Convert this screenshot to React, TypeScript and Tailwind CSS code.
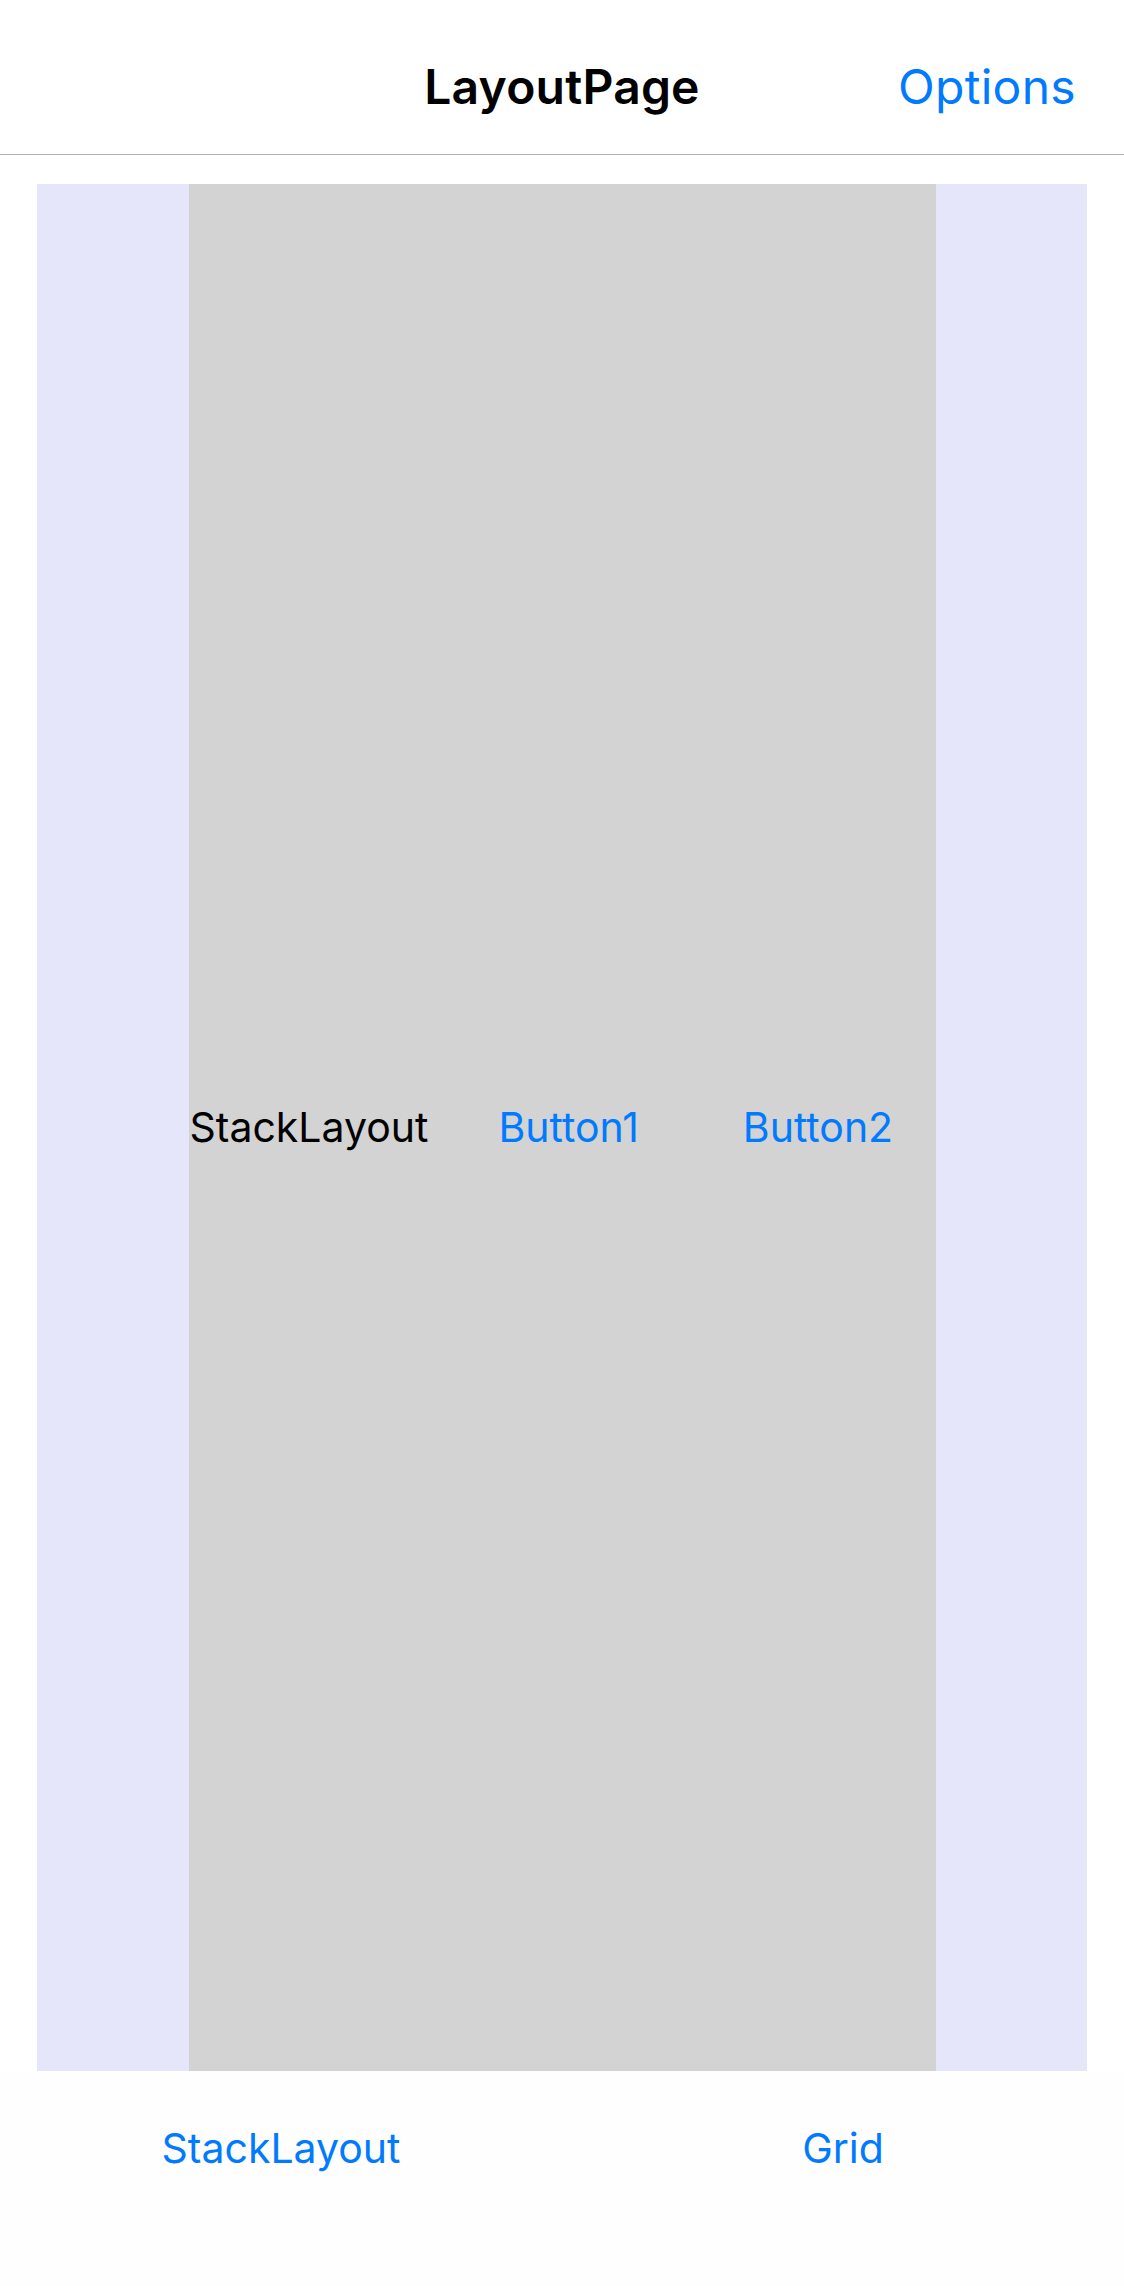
const tabs = ["StackLayout", "Grid"];

const App = () => {
  return (
    <div className="flex flex-col w-[1124px] h-[2286px] bg-white font-['Inter',sans-serif] text-black">
      <header className="grid grid-cols-[1fr_auto_1fr] items-center h-[155px] pt-[20px] border-b border-[#b2b2b2] bg-white">
        <div />
        <h1 className="text-[48px] font-semibold leading-none tracking-[0.2px]">LayoutPage</h1>
        <div className="flex justify-end pr-[48px]">
          <button className="text-[48px] leading-none text-[#007aff] tracking-[0.3px]">Options</button>
        </div>
      </header>

      <main className="px-[37px] pt-[29px]">
        <div className="flex justify-center h-[1887px] bg-[#e6e6fa]">
          <div className="flex items-center w-[747px] bg-[#d3d3d3] text-[41px] leading-none">
            <span className="pl-px">StackLayout</span>
            <button className="ml-[70px] text-[#007aff]">Button1</button>
            <button className="ml-[104px] text-[#007aff]">Button2</button>
          </div>
        </div>
      </main>

      <nav className="grid grid-cols-2 flex-1 pt-[57px] bg-[#fefefe]">
        {tabs.map((t) => (
          <div key={t} className="flex justify-center">
            <span className="text-[41px] leading-none text-[#007aff]">{t}</span>
          </div>
        ))}
      </nav>
    </div>
  );
};

export default App;
